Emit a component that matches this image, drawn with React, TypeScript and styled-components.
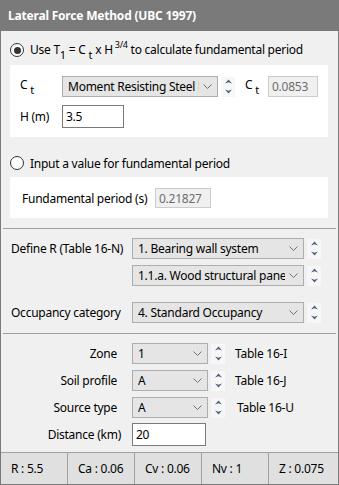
import styled, { createGlobalStyle } from "styled-components";

const Global = createGlobalStyle`
  body {
    margin: 0;
    background: #ffffff;
    font-family: "Noto Sans", "Open Sans", sans-serif;
    font-size: 12px;
    letter-spacing: -0.25px;
    color: #000;
  }
`;

const Window = styled.div`
  width: 339px;
  height: 485px;
  box-sizing: border-box;
  border-left: 1px solid #7a7a7a;
  border-right: 1px solid #7a7a7a;
  background: #f0f0f0;
  display: flex;
  flex-direction: column;
`;

const TitleBar = styled.div`
  height: 31px;
  flex: none;
  background: #7a7a7a;
  color: #fff;
  font-weight: bold;
  font-size: 12px;
  letter-spacing: -0.2px;
  display: flex;
  align-items: center;
  padding-left: 7px;
`;

const RadioRow = styled.label<{ $top: number; $bottom: number }>`
  display: flex;
  align-items: center;
  gap: 6px;
  height: 20px;
  margin: ${(p) => p.$top}px 0 ${(p) => p.$bottom}px 9px;
`;

const RadioCircle = styled.span<{ $checked?: boolean }>`
  width: 14px;
  height: 14px;
  box-sizing: border-box;
  border: 1px solid #333;
  border-radius: 50%;
  background: #fff;
  display: flex;
  align-items: center;
  justify-content: center;
  &::after {
    content: "";
    width: 7px;
    height: 7px;
    border-radius: 50%;
    background: ${(p) => (p.$checked ? "#333" : "transparent")};
  }
`;

const Panel = styled.div<{ $h: number; $top: number; $left: number }>`
  margin-left: 9px;
  width: 318px;
  height: ${(p) => p.$h}px;
  box-sizing: border-box;
  background: #fff;
  display: flex;
  flex-direction: column;
  gap: 8px;
  padding: ${(p) => p.$top}px 0 0 ${(p) => p.$left}px;
`;

const Row = styled.div`
  display: flex;
  align-items: center;
`;

const Label = styled.span<{ $w: number; $pl?: number }>`
  width: ${(p) => p.$w}px;
  box-sizing: border-box;
  padding-left: ${(p) => p.$pl ?? 0}px;
  flex: none;
`;

const RightLabel = styled.span<{ $pad: number }>`
  width: 131px;
  flex: none;
  box-sizing: border-box;
  text-align: right;
  padding-right: ${(p) => p.$pad}px;
`;

const Sub = styled.sub<{ $gap?: number }>`
  font-size: 11px;
  vertical-align: -5px;
  margin-left: ${(p) => p.$gap ?? 3}px;
`;

const Sup = styled.sup`
  font-size: 9px;
  vertical-align: 6px;
  margin-left: 2px;
`;

const Select = styled.div<{ $w: number }>`
  width: ${(p) => p.$w}px;
  height: 21px;
  box-sizing: border-box;
  border: 1px solid #adadad;
  background: #e5e5e5;
  display: flex;
  align-items: center;
  padding: 0 0 0 5px;
  flex: none;
  span {
    flex: 1;
    overflow: hidden;
    white-space: nowrap;
  }
  svg {
    margin: 0 5px 0 4px;
    flex: none;
  }
`;

const TextBox = styled.div<{ $w: number; $h: number; $disabled?: boolean }>`
  width: ${(p) => p.$w}px;
  height: ${(p) => p.$h}px;
  box-sizing: border-box;
  border: 1px solid ${(p) => (p.$disabled ? "#cccccc" : "#7a7a7a")};
  background: ${(p) => (p.$disabled ? "#f0f0f0" : "#fff")};
  color: ${(p) => (p.$disabled ? "#6d6d6d" : "#000")};
  display: flex;
  align-items: center;
  padding-left: 3px;
  flex: none;
`;

const SpinBox = styled.div`
  width: 14px;
  height: 20px;
  margin: 0 2px 0 3px;
  background: #f7f7f7;
  display: flex;
  align-items: center;
  justify-content: center;
  flex: none;
`;

const Separator = styled.div<{ $top: number }>`
  height: 1px;
  background: #a0a0a0;
  margin: ${(p) => p.$top}px 2px 0 2px;
`;

const Block = styled.div<{ $top: number }>`
  display: flex;
  flex-direction: column;
  margin-top: ${(p) => p.$top}px;
`;

const BlockRow = styled(Row)<{ $mt?: number; $indent?: number }>`
  margin-top: ${(p) => p.$mt ?? 0}px;
  padding-left: ${(p) => p.$indent ?? 0}px;
  height: 21px;
`;

const TableNote = styled.span<{ $ml?: number }>`
  margin-left: ${(p) => p.$ml ?? 8}px;
`;

const StatusBar = styled.div`
  margin-top: auto;
  height: 33px;
  box-sizing: border-box;
  border-top: 1px solid #a0a0a0;
  border-bottom: 1px solid #7a7a7a;
  background: #e6e6e6;
  display: grid;
  grid-template-columns: 67px 67px 67px 67px 1fr;
`;

const StatusCell = styled.div`
  display: flex;
  align-items: center;
  padding-left: 10px;
  border-right: 1px solid #a0a0a0;
  background: #e0e0e0;
  &:last-child {
    border-right: none;
  }
`;

const Chevron = () => (
  <svg width="9" height="5" viewBox="0 0 9 5">
    <polyline points="0.5,0.5 4.5,4.5 8.5,0.5" fill="none" stroke="#707070" strokeWidth="1" />
  </svg>
);

const Spinner = () => (
  <SpinBox>
    <svg width="9" height="17" viewBox="0 0 9 17">
      <path d="M1 5.5 L4.5 1.5 L8 5.5 L4.5 4.2 Z" fill="#4d5f80" />
      <path d="M1 11.5 L4.5 15.5 L8 11.5 L4.5 12.8 Z" fill="#4d5f80" />
    </svg>
  </SpinBox>
);

const Combo = ({ w, value }: { w: number; value: string }) => (
  <Select $w={w}>
    <span>{value}</span>
    <Chevron />
  </Select>
);

const status = ["R : 5.5", "Ca : 0.06", "Cv : 0.06", "Nv : 1", "Z : 0.075"];

const App = () => {
  return (
    <>
      <Global />
      <Window>
        <TitleBar>Lateral Force Method (UBC 1997)</TitleBar>

        <RadioRow $top={9} $bottom={5}>
          <RadioCircle $checked />
          <span>
            Use T<Sub $gap={0}>1</Sub> = C<Sub>t</Sub> x H<Sup>3/4</Sup> to calculate fundamental period
          </span>
        </RadioRow>
        <Panel $h={72} $top={11} $left={10}>
          <Row>
            <Label $w={42}>
              C<Sub>t</Sub>
            </Label>
            <Combo w={156} value="Moment Resisting Steel Frame" />
            <Spinner />
            <Label $w={23} style={{ marginLeft: 8 }}>
              C<Sub>t</Sub>
            </Label>
            <TextBox $w={50} $h={21} $disabled>
              0.0853
            </TextBox>
          </Row>
          <Row>
            <Label $w={42}>H (m)</Label>
            <TextBox $w={62} $h={23}>
              3.5
            </TextBox>
          </Row>
        </Panel>

        <RadioRow $top={16} $bottom={4}>
          <RadioCircle />
          <span>Input a value for fundamental period</span>
        </RadioRow>
        <Panel $h={41} $top={11} $left={12}>
          <Row>
            <Label $w={133}>Fundamental period (s)</Label>
            <TextBox $w={56} $h={20} $disabled>
              0.21827
            </TextBox>
          </Row>
        </Panel>

        <Separator $top={10} />

        <Block $top={9}>
          <BlockRow>
            <Label $w={131} $pl={10}>
              Define R (Table 16-N)
            </Label>
            <Combo w={172} value="1. Bearing wall system" />
            <Spinner />
          </BlockRow>
          <BlockRow $mt={6} $indent={131}>
            <Combo w={172} value="1.1.a. Wood structural panel walls" />
            <Spinner />
          </BlockRow>
          <BlockRow $mt={16}>
            <Label $w={131} $pl={10}>
              Occupancy category
            </Label>
            <Combo w={172} value="4. Standard Occupancy" />
            <Spinner />
          </BlockRow>
        </Block>

        <Separator $top={10} />

        <Block $top={9}>
          <BlockRow>
            <RightLabel $pad={15}>Zone</RightLabel>
            <Combo w={76} value="1" />
            <Spinner />
            <TableNote>Table 16-I</TableNote>
          </BlockRow>
          <BlockRow $mt={6}>
            <RightLabel $pad={15}>Soil profile</RightLabel>
            <Combo w={76} value="A" />
            <Spinner />
            <TableNote>Table 16-J</TableNote>
          </BlockRow>
          <BlockRow $mt={6}>
            <RightLabel $pad={15}>Source type</RightLabel>
            <Combo w={76} value="A" />
            <Spinner />
            <TableNote $ml={10}>Table 16-U</TableNote>
          </BlockRow>
          <BlockRow $mt={5} style={{ height: 23 }}>
            <RightLabel $pad={11}>Distance (km)</RightLabel>
            <TextBox $w={74} $h={23}>
              20
            </TextBox>
          </BlockRow>
        </Block>

        <StatusBar>
          {status.map((s) => (
            <StatusCell key={s}>{s}</StatusCell>
          ))}
        </StatusBar>
      </Window>
    </>
  );
};

export default App;
